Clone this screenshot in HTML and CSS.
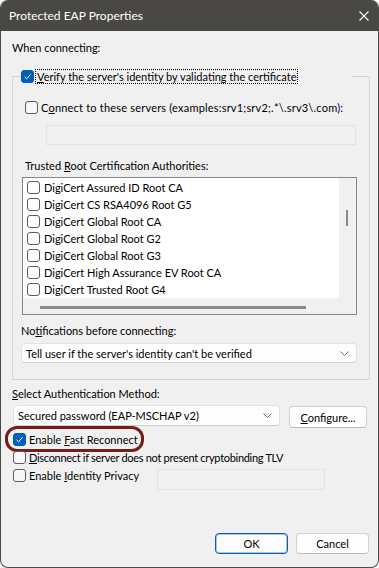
FILE: index.html
```html
<!DOCTYPE html>
<html lang="en">
<head>
  <meta charset="UTF-8" />
  <title>Protected EAP Properties</title>
  <link rel="stylesheet" href="styles.css">
</head>
<body>

<div class="window">
  <div class="titlebar">
    <span class="title">Protected EAP Properties</span>
    <svg class="close" width="10" height="10" viewBox="0 0 10 10">
      <path d="M0.5 0.5 L9.5 9.5 M9.5 0.5 L0.5 9.5" stroke="#fff" stroke-width="1.1" fill="none"/>
    </svg>
  </div>

  <div class="content">
    <div class="label when">When connecting:</div>

    <fieldset class="group">
      <legend class="legend">
        <span class="box checked">
          <svg width="9" height="9" viewBox="0 0 9 9"><path d="M1.5 4.8 L3.6 6.8 L7.6 2.2" stroke="#fff" stroke-width="1" fill="none"/></svg>
        </span>
        <span class="focus"><u>V</u>erify the server's identity by validating the certificate</span>
      </legend>

      <div class="option servers-opt">
        <span class="box"></span>
        <span class="wide">C<u>o</u>nnect to these servers (examples:srv1;srv2;.*\.srv3\.com):</span>
      </div>
      <div class="textbox servers"></div>

      <div class="label trusted">Trusted <u>R</u>oot Certification Authorities:</div>
      <div class="listbox">
        <ul class="items">
          <li><span class="box"></span>DigiCert Assured ID Root CA</li>
          <li><span class="box"></span>DigiCert CS RSA4096 Root G5</li>
          <li><span class="box"></span>DigiCert Global Root CA</li>
          <li><span class="box"></span>DigiCert Global Root G2</li>
          <li><span class="box"></span>DigiCert Global Root G3</li>
          <li><span class="box"></span>DigiCert High Assurance EV Root CA</li>
          <li><span class="box"></span>DigiCert Trusted Root G4</li>
        </ul>
        <div class="vscroll"><span class="thumb"></span></div>
        <div class="hscroll"><span class="thumb"></span></div>
        <div class="corner"></div>
      </div>

      <div class="label notify">No<u>t</u>ifications before connecting:</div>
      <div class="dropdown notify-select">
        <span>Tell user if the server's identity can't be verified</span>
        <svg class="chevron" width="9" height="5" viewBox="0 0 9 5"><path d="M0.5 0.5 L4.5 4.5 L8.5 0.5" stroke="#707070" stroke-width="1" fill="none"/></svg>
      </div>
    </fieldset>

    <div class="label method"><u>S</u>elect Authentication Method:</div>
    <div class="method-row">
      <div class="dropdown method-select">
        <span>Secured password (EAP-MSCHAP v2)</span>
        <svg class="chevron" width="9" height="5" viewBox="0 0 9 5"><path d="M0.5 0.5 L4.5 4.5 L8.5 0.5" stroke="#707070" stroke-width="1" fill="none"/></svg>
      </div>
      <button class="btn configure"><u>C</u>onfigure...</button>
    </div>

    <div class="checks">
      <div class="option fast">
        <span class="box checked">
          <svg width="9" height="9" viewBox="0 0 9 9"><path d="M1.5 4.8 L3.6 6.8 L7.6 2.2" stroke="#fff" stroke-width="1" fill="none"/></svg>
        </span>
        <span>Enable <u>F</u>ast Reconnect</span>
        <span class="highlight"></span>
      </div>
      <div class="option">
        <span class="box"></span>
        <span class="tight"><u>D</u>isconnect if server does not present cryptobinding TLV</span>
      </div>
      <div class="identity-row">
        <div class="option identity">
          <span class="box"></span>
          <span>Enable <u>I</u>dentity Privacy</span>
        </div>
        <div class="textbox anon"></div>
      </div>
    </div>

    <div class="footer">
      <button class="btn ok">OK</button>
      <button class="btn">Cancel</button>
    </div>
  </div>
</div>

</body>
</html>
```

FILE: styles.css
```css
* {
  box-sizing: border-box;
}

body {
  margin: 0;
  background: #ffffff;
  font-family: Lato, "Noto Sans", sans-serif;
  font-size: 11px;
  color: #000;
}

u {
  text-decoration: underline;
  text-underline-offset: 1px;
}

.window {
  width: 379px;
  height: 568px;
  background: #f0f0f0;
  border: 1px solid #4a4845;
  border-top: none;
  border-radius: 8px;
  overflow: hidden;
  display: flex;
  flex-direction: column;
}

.titlebar {
  height: 31px;
  background: #4a4845;
  color: #fff;
  display: flex;
  align-items: center;
  justify-content: space-between;
  padding: 0 9px 0 8px;
  flex-shrink: 0;
}

.title {
  font-size: 12px;
  line-height: 16px;
}

.close {
  display: block;
  margin-top: 1px;
}

.content {
  padding: 9px 8px 0 11px;
}

.label {
  line-height: 16px;
  white-space: nowrap;
}

/* group box */

.group {
  margin: 13px 0 0 0;
  padding: 16px 12px 16px 8px;
  border: 1px solid #d6d6d6;
  min-width: 0;
}

.legend {
  padding: 0;
  width: 330px;
  height: 14px;
  display: flex;
  align-items: center;
  gap: 2px;
  background: #f0f0f0;
}

.focus {
  outline: 1px dotted #000;
  line-height: 13px;
  padding: 0 1px;
  white-space: nowrap;
}

.box {
  width: 13px;
  height: 13px;
  border: 1px solid #5c5c5c;
  border-radius: 3px;
  background: #f7f7f7;
  flex-shrink: 0;
  display: flex;
  align-items: center;
  justify-content: center;
}

.box.checked {
  background: #005fb8;
  border-color: #005fb8;
}

.box svg {
  display: block;
}

.option {
  display: flex;
  align-items: center;
  gap: 3px;
  height: 16px;
  white-space: nowrap;
  position: relative;
}

.wide {
  letter-spacing: 0.2px;
}

.tight {
  letter-spacing: -0.3px;
}

.servers-opt {
  margin-left: 4px;
}

.textbox {
  height: 20px;
  border: 1px solid #e3e3e3;
  background: #f0f0f0;
}

.servers {
  margin: 10px 1px 0 25px;
}

.trusted {
  margin: 13px 0 0 4px;
}

/* certificate list */

.listbox {
  margin: 3px 0 0 1px;
  height: 138px;
  border: 1px solid #828790;
  background: #fff;
  display: grid;
  grid-template-columns: 1fr 17px;
  grid-template-rows: 1fr 16px;
}

.items {
  list-style: none;
  margin: 0;
  padding: 1px 0 0 4px;
  overflow: hidden;
}

.items li {
  height: 17px;
  display: flex;
  align-items: center;
  gap: 4px;
  white-space: nowrap;
}

.items .box {
  background: #fff;
}

.vscroll {
  background: #f0f0f0;
}

.vscroll .thumb {
  display: block;
  width: 2px;
  height: 16px;
  margin: 32px 0 0 7px;
  background: #8a8a8a;
}

.hscroll {
  background: #f0f0f0;
  padding: 8px 0 0 17px;
}

.hscroll .thumb {
  display: block;
  width: 266px;
  height: 3px;
  background: #8a8a8a;
}

.corner {
  background: #f0f0f0;
}

.notify {
  margin-top: 8px;
}

.dropdown {
  height: 20px;
  background: #fdfdfd;
  border: 1px solid #e2e2e2;
  border-bottom-color: #cfcfcf;
  border-radius: 4px;
  display: flex;
  align-items: center;
  justify-content: space-between;
  padding: 0 7px 0 4px;
  white-space: nowrap;
}

.chevron {
  display: block;
}

.notify-select {
  margin-top: 4px;
}

/* authentication method */

.method {
  margin-top: 6px;
}

.method-row {
  display: flex;
  align-items: flex-start;
  gap: 9px;
  margin: 3px 0 0 1px;
}

.method-select {
  width: 267px;
  height: 21px;
}

.btn {
  font-family: inherit;
  font-size: 11px;
  color: #000;
  background: #fdfdfd;
  border: 1px solid #d0d0d0;
  border-bottom-color: #bcbcbc;
  border-radius: 4px;
  height: 21px;
  padding: 0;
}

.configure {
  width: 78px;
  height: 22px;
  margin-top: 1px;
}

.checks {
  margin: 2px 0 0 1px;
}

.checks .option {
  height: 18px;
}

.highlight {
  position: absolute;
  left: -8px;
  top: -4px;
  width: 139px;
  height: 26px;
  border: 3px solid #7a1c1c;
  border-radius: 12px;
}

.identity-row {
  display: flex;
  align-items: flex-start;
}

.identity {
  width: 144px;
}

.anon {
  width: 168px;
  height: 21px;
  margin-top: 3px;
}

.footer {
  display: flex;
  justify-content: flex-end;
  gap: 8px;
  margin-top: 43px;
  padding-right: 1px;
}

.footer .btn {
  width: 73px;
}

.footer .ok {
  border: 1px solid #005fb8;
  box-shadow: inset 0 0 0 1px rgba(0, 95, 184, 0.35);
}
```
